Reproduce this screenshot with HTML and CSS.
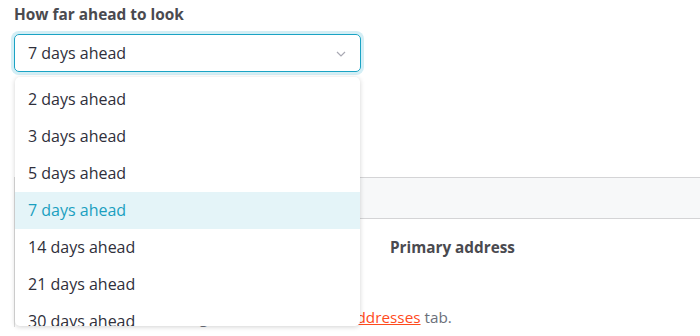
FILE: index.html
```html
<!DOCTYPE html>
<html lang="en">
<head>
    <meta charset="UTF-8">
    <title>Reminder settings</title>
    <link rel="stylesheet" href="styles.css">
</head>
<body>
    <div class="page">
        <div class="field">
            <label class="field-label">How far ahead to look</label>
            <div class="select">
                <span class="select-value">7 days ahead</span>
                <svg class="chevron" width="10" height="6" viewBox="0 0 10 6">
                    <path d="M1 1 L5 5 L9 1" fill="none" stroke="#a9a9b3" stroke-width="1.2"/>
                </svg>
            </div>
            <ul class="options">
                <li class="option">2 days ahead</li>
                <li class="option">3 days ahead</li>
                <li class="option">5 days ahead</li>
                <li class="option selected">7 days ahead</li>
                <li class="option">14 days ahead</li>
                <li class="option">21 days ahead</li>
                <li class="option">30 days ahead</li>
            </ul>
        </div>

        <div class="card">
            <div class="card-head"></div>
            <div class="card-row">
                <span class="col-title">Primary address</span>
            </div>
            <p class="hint">You can add or change addresses on the <a href="#">Addresses</a> tab.</p>
        </div>
    </div>
</body>
</html>
```

FILE: styles.css
```css
* {
    margin: 0;
    padding: 0;
    box-sizing: border-box;
}

html, body {
    height: 336px;
}

body {
    font-family: "Open Sans", Lato, sans-serif;
    background: white;
    color: #2f2f3b;
    overflow: hidden;
}

.page {
    padding: 5px 0 0 14px;
}

.field {
    position: relative;
    width: 347px;
}

.field-label {
    display: block;
    font-size: 15.4px;
    font-weight: bold;
    color: #4a4a4f;
    line-height: 20px;
    margin-bottom: 9px;
}

.select {
    height: 38px;
    border: 1px solid #1aa3c4;
    border-radius: 5px;
    box-shadow: 0 0 0 3px #d3eef5;
    display: flex;
    align-items: center;
    justify-content: space-between;
    padding: 0 14px 0 13px;
    font-size: 16px;
}

.chevron {
    margin-top: 1px;
}

.options {
    position: absolute;
    top: 72px;
    left: 1px;
    width: 345px;
    height: 249px;
    list-style: none;
    background: white;
    border-radius: 5px;
    padding-top: 4px;
    overflow: hidden;
    box-shadow: 0 1px 5px rgba(0, 0, 0, 0.18);
    z-index: 2;
}

.option {
    height: 37px;
    line-height: 37px;
    padding-left: 13px;
    font-size: 16px;
}

.option.selected {
    background: #e4f4f8;
    color: #1a9fc0;
}

.card {
    margin-top: 105px;
    border-left: 1px solid #dcdcdc;
}

.card-head {
    height: 42px;
    background: #f7f8f9;
    border-top: 1px solid #d4d4d6;
    border-bottom: 1px solid #d4d4d6;
}

.card-row {
    padding: 17px 0 0 375px;
    height: 88px;
}

.col-title {
    font-size: 15.3px;
    font-weight: bold;
    color: #4a4a4f;
}

.hint {
    font-size: 15.3px;
    color: #6b6f7a;
    padding-left: 39px;
}

.hint a {
    color: #ff4a1c;
}
```
